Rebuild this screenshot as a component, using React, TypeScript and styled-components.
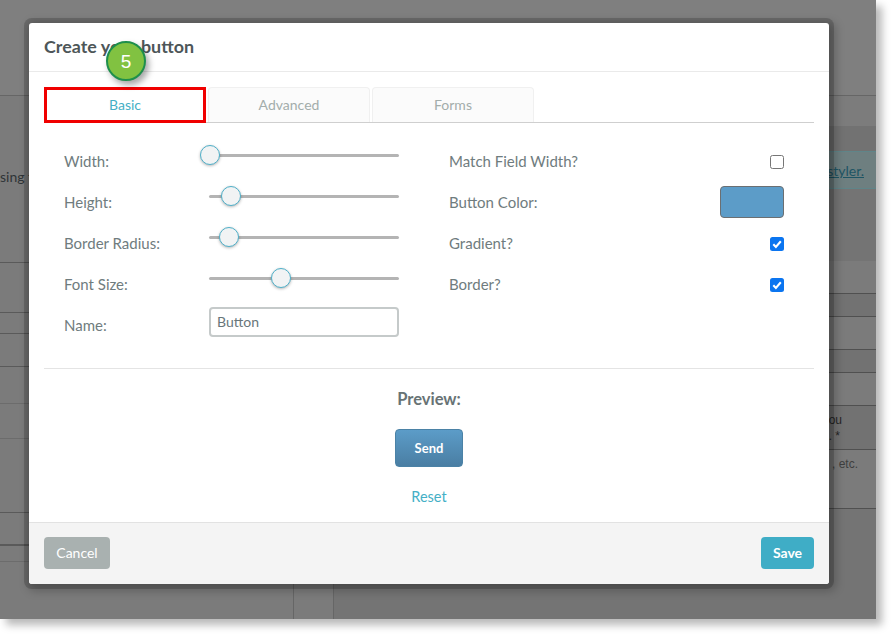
import React from "react";
import styled, { createGlobalStyle } from "styled-components";

const Global = createGlobalStyle`
  html, body { margin: 0; padding: 0; background: #fff; }
  body { width: 891px; height: 634px; overflow: hidden; font-family: Lato, "Liberation Sans", sans-serif; }
`;

const Shot = styled.div`
  position: relative;
  width: 876px;
  height: 619px;
  background: #7b7b7b;
  box-shadow: 6px 6px 8px rgba(0, 0, 0, 0.28);
  overflow: hidden;
`;

const PageBehind = styled.div`
  display: flex;
  flex-direction: column;
  height: 100%;
  font-family: "Liberation Sans", Arial, sans-serif;
  font-size: 12px;
  color: #333;
`;

const TopBar = styled.div`
  height: 96px;
  flex: none;
  box-sizing: border-box;
  border-bottom: 1px solid #666;
  background: #7f7f7f;
`;

const Columns = styled.div`
  flex: 1;
  display: flex;
  min-height: 0;
`;

const LeftColumn = styled.div`
  width: 334px;
  flex: none;
  display: flex;
  flex-direction: column;
  background: #7b7b7b;
  border-right: 1px solid #666;
  box-sizing: border-box;
`;

const RightColumn = styled.div`
  flex: 1;
  display: flex;
  flex-direction: column;
`;

const IntroRow = styled.div`
  height: 167px;
  flex: none;
  box-sizing: border-box;
  padding-top: 72px;
  border-bottom: 1px solid #5a5a5a;
  font: 400 14px/18px Lato, sans-serif;
  color: #2f3437;
  white-space: nowrap;
`;

const LeftRow = styled.div<{ $h: number; $soft?: boolean; $bold?: boolean }>`
  height: ${(p) => p.$h}px;
  flex: none;
  box-sizing: border-box;
  border-bottom: ${(p) => (p.$bold ? 2 : 1)}px solid ${(p) => (p.$soft ? "#6c6c6c" : "#5a5a5a")};
`;

const LeftTail = styled.div`
  flex: 1;
  position: relative;
`;

const TailRule = styled.span`
  position: absolute;
  top: 0;
  bottom: 0;
  left: 293px;
  width: 1px;
  background: #666;
`;

const Band = styled.div<{ $h: number; $shade: string }>`
  height: ${(p) => p.$h}px;
  flex: none;
  background: ${(p) => p.$shade};
`;

const Banner = styled.div`
  height: 38px;
  flex: none;
  box-sizing: border-box;
  display: flex;
  justify-content: flex-end;
  align-items: center;
  padding-right: 12px;
  background: #6e7f80;
  border-top: 1px solid #5f8589;
  border-bottom: 1px solid #5f8589;
  font: 400 14px Lato, sans-serif;
`;

const BannerLink = styled.span`
  color: #1e5564;
  text-decoration: underline;
`;

const Row = styled.div<{ $h: number; $dark?: boolean }>`
  height: ${(p) => p.$h}px;
  flex: none;
  box-sizing: border-box;
  border-bottom: 1px solid #505050;
  background: ${(p) => (p.$dark ? "#727272" : "#7b7b7b")};
  display: flex;
  flex-direction: column;
  align-items: flex-end;
  padding-top: 6px;
  line-height: 16px;
`;

const RowNote = styled.span<{ $right: number; $soft?: boolean }>`
  margin-right: ${(p) => p.$right}px;
  color: ${(p) => (p.$soft ? "#3f3f3f" : "#262626")};
`;

const Tail = styled.div`
  flex: 1;
  background: #747474;
`;

const Overlay = styled.div`
  position: absolute;
  left: 29px;
  top: 23px;
`;

const Modal = styled.div`
  width: 800px;
  height: 561px;
  display: flex;
  flex-direction: column;
  background: #fff;
  border-radius: 3px;
  box-shadow: 0 0 0 5px rgba(0, 0, 0, 0.17), 3px 3px 10px 4px rgba(0, 0, 0, 0.22);
  overflow: hidden;
`;

const Header = styled.header`
  height: 49px;
  flex: none;
  box-sizing: border-box;
  display: flex;
  align-items: center;
  padding: 0 15px 2px;
  border-bottom: 1px solid #eaeaea;
`;

const Title = styled.h1`
  margin: 0;
  font-size: 17.9px;
  font-weight: 700;
  color: #4d5658;
`;

const Body = styled.div`
  flex: 1;
  display: flex;
  flex-direction: column;
  padding: 15px 15px 0;
`;

const TabBar = styled.nav`
  height: 36px;
  flex: none;
  box-sizing: border-box;
  display: flex;
  gap: 2px;
  border-bottom: 1px solid #cfcfcf;
`;

const Tab = styled.div<{ $active?: boolean }>`
  width: 162px;
  height: ${(p) => (p.$active ? "36px" : "35px")};
  box-sizing: border-box;
  display: flex;
  align-items: center;
  justify-content: center;
  padding-bottom: 2px;
  font-size: 14px;
  color: ${(p) => (p.$active ? "#45afc6" : "#a3adab")};
  background: ${(p) => (p.$active ? "#fff" : "#fbfbfb")};
  border: ${(p) => (p.$active ? "3px solid #f00000" : "1px solid #f0f0f0")};
  border-bottom-width: ${(p) => (p.$active ? "3px" : "0")};
  border-radius: ${(p) => (p.$active ? "0" : "4px 4px 0 0")};
`;

const Form = styled.div`
  display: flex;
  gap: 50px;
  padding: 18px 30px 0 20px;
  flex: none;
`;

const Column = styled.div`
  width: 335px;
  flex: none;
  display: flex;
  flex-direction: column;
`;

const FieldRow = styled.div`
  height: 41px;
  box-sizing: border-box;
  padding-bottom: 2px;
  display: flex;
  align-items: center;
  justify-content: space-between;
`;

const Label = styled.span`
  font-size: 15px;
  color: #6f7c7e;
`;

const SliderTrack = styled.div`
  position: relative;
  width: 190px;
  height: 3px;
  background: #b4b4b4;
  border-radius: 2px;
  margin-top: -10px;
`;

const Knob = styled.span`
  position: absolute;
  top: -9px;
  width: 20px;
  height: 20px;
  box-sizing: border-box;
  border-radius: 50%;
  background: #f1f3f4;
  border: 1.5px solid #4fb0c9;
  box-shadow: 0 1px 3px rgba(0, 0, 0, 0.3);
  transform: translateX(-10px);
`;

const NameInput = styled.input`
  width: 190px;
  height: 30px;
  box-sizing: border-box;
  margin-top: -6px;
  padding: 0 6px;
  border: 2px solid #c5caca;
  border-radius: 4px;
  font: 400 14px Lato, sans-serif;
  color: #68767a;
  background: #fff;
  outline: none;
`;

const CheckBox = styled.span<{ $on?: boolean }>`
  width: 14px;
  height: 14px;
  margin-top: 2px;
  box-sizing: border-box;
  display: flex;
  align-items: center;
  justify-content: center;
  border-radius: 2.5px;
  background: ${(p) => (p.$on ? "#0b75f0" : "#fff")};
  border: ${(p) => (p.$on ? "none" : "1px solid #767676")};
`;

const Swatch = styled.span`
  width: 64px;
  height: 32px;
  box-sizing: border-box;
  background: #5c9cc8;
  border: 1px solid #6b6f72;
  border-radius: 4px;
`;

const Divider = styled.hr`
  width: 100%;
  margin: 22px 0 0;
  border: none;
  border-top: 1px solid #e4e4e4;
`;

const Preview = styled.div`
  display: flex;
  flex-direction: column;
  align-items: center;
`;

const PreviewTitle = styled.div`
  margin-top: 20px;
  height: 20px;
  line-height: 20px;
  font-size: 16.5px;
  font-weight: 700;
  color: #687375;
`;

const SendButton = styled.button`
  margin-top: 20px;
  width: 68px;
  height: 38px;
  padding: 0;
  border: 1px solid #4b82a6;
  border-radius: 4px;
  background: linear-gradient(#5c9cc8, #4a7ea3);
  color: #fff;
  font: 700 13px Lato, sans-serif;
`;

const ResetLink = styled.a`
  margin-top: 21px;
  font-size: 14.5px;
  line-height: 18px;
  color: #45afc6;
`;

const Footer = styled.footer`
  height: 62px;
  flex: none;
  box-sizing: border-box;
  display: flex;
  align-items: center;
  justify-content: space-between;
  padding: 0 15px 2px;
  background: #f4f4f4;
  border-top: 1px solid #e2e2e2;
`;

const FootButton = styled.button<{ $primary?: boolean }>`
  height: 32px;
  width: ${(p) => (p.$primary ? 53 : 66)}px;
  padding: 0;
  border: none;
  border-radius: 4px;
  color: #fff;
  font: ${(p) => (p.$primary ? 700 : 400)} 14px Lato, sans-serif;
  background: ${(p) => (p.$primary ? "#3fadc6" : "#a9b1b0")};
`;

const StepBadge = styled.div`
  position: absolute;
  left: 77px;
  top: 18px;
  width: 40px;
  height: 40px;
  box-sizing: border-box;
  display: flex;
  align-items: center;
  justify-content: center;
  padding-top: 1px;
  border-radius: 50%;
  background: #81c241;
  border: 2px solid #1e8f4c;
  color: #fff;
  font: 400 19px "Liberation Sans", Arial, sans-serif;
  box-shadow: 3px 4px 6px rgba(0, 0, 0, 0.35);
`;

const Check = () => (
  <svg width="10" height="10" viewBox="0 0 10 10" fill="none">
    <path d="M1.3 5.2 L3.9 7.9 L8.8 2.3" stroke="#fff" strokeWidth="2.1" />
  </svg>
);

const sliders = [
  { label: "Width:", at: 1 },
  { label: "Height:", at: 22 },
  { label: "Border Radius:", at: 20 },
  { label: "Font Size:", at: 72 },
];

export default function App() {
  return (
    <Shot>
      <Global />
      <PageBehind>
        <TopBar />
        <Columns>
          <LeftColumn>
            <IntroRow>sing the</IntroRow>
            <LeftRow $h={50} />
            <LeftRow $h={21} />
            <LeftRow $h={33} />
            <LeftRow $h={37} $soft />
            <LeftRow $h={35} $soft />
            <LeftRow $h={74} />
            <LeftRow $h={33} $bold />
            <LeftRow $h={16} $soft />
            <LeftTail>
              <TailRule />
            </LeftTail>
          </LeftColumn>
          <RightColumn>
            <Band $h={30} $shade="#7c7c7c" />
            <Band $h={25} $shade="#727272" />
            <Banner>
              <BannerLink>styler.</BannerLink>
            </Banner>
            <Band $h={72} $shade="#747474" />
            <Row $h={33} />
            <Row $h={23} $dark />
            <Row $h={33} />
            <Row $h={23} $dark />
            <Row $h={33} />
            <Row $h={44} $dark>
              <RowNote $right={34}>ou</RowNote>
              <RowNote $right={36}>. *</RowNote>
            </Row>
            <Row $h={59}>
              <RowNote $right={18} $soft>
                , etc.
              </RowNote>
            </Row>
            <Tail />
          </RightColumn>
        </Columns>
      </PageBehind>
      <Overlay>
        <Modal>
          <Header>
            <Title>Create your button</Title>
          </Header>
          <Body>
            <TabBar>
              <Tab $active>Basic</Tab>
              <Tab>Advanced</Tab>
              <Tab>Forms</Tab>
            </TabBar>
            <Form>
              <Column>
                {sliders.map((s) => (
                  <FieldRow key={s.label}>
                    <Label>{s.label}</Label>
                    <SliderTrack>
                      <Knob style={{ left: `${s.at}px` }} />
                    </SliderTrack>
                  </FieldRow>
                ))}
                <FieldRow>
                  <Label>Name:</Label>
                  <NameInput readOnly value="Button" />
                </FieldRow>
              </Column>
              <Column>
                <FieldRow>
                  <Label>Match Field Width?</Label>
                  <CheckBox />
                </FieldRow>
                <FieldRow>
                  <Label>Button Color:</Label>
                  <Swatch />
                </FieldRow>
                <FieldRow>
                  <Label>Gradient?</Label>
                  <CheckBox $on>
                    <Check />
                  </CheckBox>
                </FieldRow>
                <FieldRow>
                  <Label>Border?</Label>
                  <CheckBox $on>
                    <Check />
                  </CheckBox>
                </FieldRow>
              </Column>
            </Form>
            <Divider />
            <Preview>
              <PreviewTitle>Preview:</PreviewTitle>
              <SendButton>Send</SendButton>
              <ResetLink>Reset</ResetLink>
            </Preview>
          </Body>
          <Footer>
            <FootButton>Cancel</FootButton>
            <FootButton $primary>Save</FootButton>
          </Footer>
        </Modal>
        <StepBadge>5</StepBadge>
      </Overlay>
    </Shot>
  );
}
